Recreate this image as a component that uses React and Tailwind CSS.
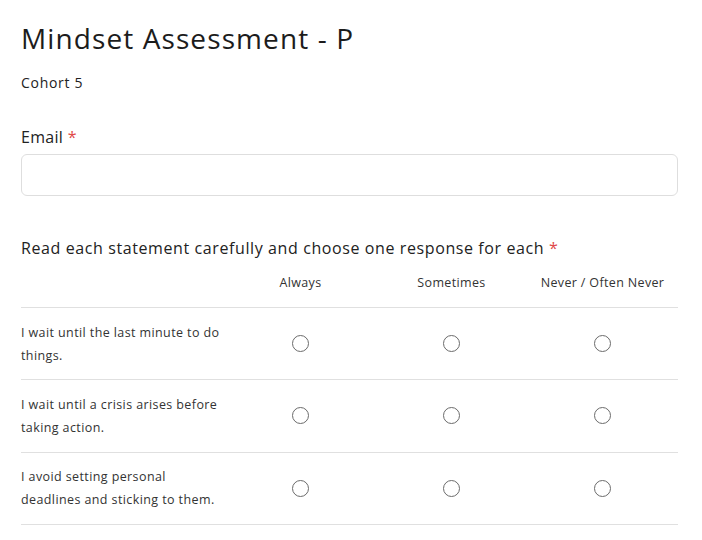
const rows = [
  ['I wait until the last minute to do', 'things.'],
  ['I wait until a crisis arises before', 'taking action.'],
  ['I avoid setting personal', 'deadlines and sticking to them.'],
];

const options = ['Always', 'Sometimes', 'Never / Often Never'];

const Radio = () => (
  <span className="block w-[17px] h-[17px] rounded-full border border-[#6b6b6b] bg-white" />
);

export default function App() {
  return (
    <div className="min-h-[540px] bg-white text-[#222] px-[21px] pt-[20px] font-['Open_Sans',sans-serif]">
      <h1 className="text-[28px] leading-[36px] tracking-[1.1px] text-[#1c1c1c]">Mindset Assessment - P</h1>
      <p className="mt-[17px] text-[14px] leading-[20px] tracking-[0.7px]">Cohort 5</p>

      <div className="mt-[33px]">
        <label className="block text-[16px] leading-[22px] font-medium tracking-[0.3px]">
          Email <span className="text-[#e04848]">*</span>
        </label>
        <div className="mt-[6px] w-[657px] h-[42px] border border-[#dedede] rounded-[6px] bg-white" />
      </div>

      <div className="mt-[41px] w-[657px]">
        <h2 className="text-[16px] leading-[22px] font-medium tracking-[0.6px]">
          Read each statement carefully and choose one response for each <span className="text-[#e04848]">*</span>
        </h2>
        <div className="mt-[15px] grid grid-cols-[204px_151px_151px_151px] h-[34px] border-b border-[#e0e0e0] text-[12.5px] tracking-[0.35px] text-[#333]">
          <div />
          {options.map((o) => (
            <div key={o} className="text-center leading-[18px]">{o}</div>
          ))}
        </div>
        {rows.map((r, i) => (
          <div key={i} className="grid grid-cols-[204px_151px_151px_151px] h-[72.3px] items-center border-b border-[#e0e0e0]">
            <div className="text-[12.5px] leading-[23px] tracking-[0.4px] text-[#333]">
              {r[0]}
              <br />
              {r[1]}
            </div>
            {options.map((o) => (
              <div key={o} className="flex justify-center">
                <Radio />
              </div>
            ))}
          </div>
        ))}
      </div>
    </div>
  );
}
